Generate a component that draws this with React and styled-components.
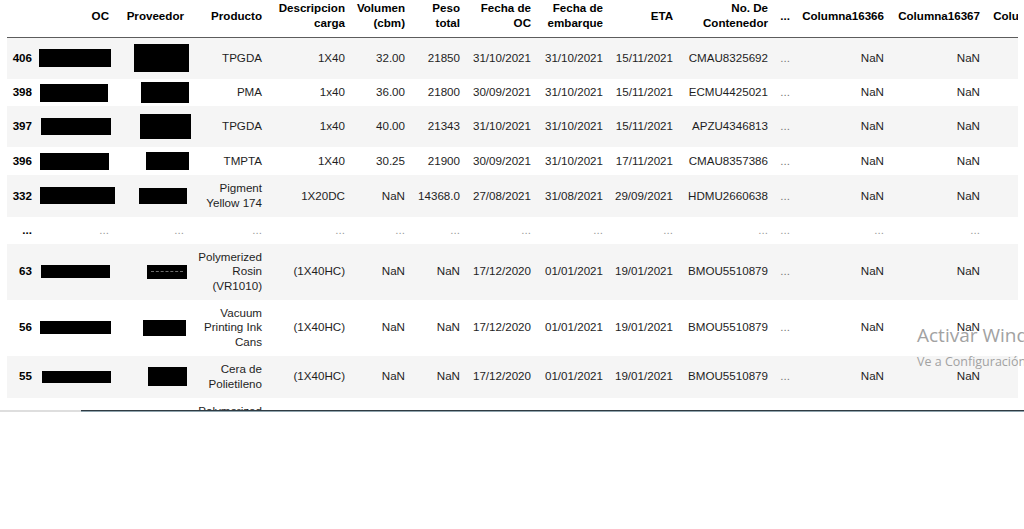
import React from "react";
import styled, { createGlobalStyle } from "styled-components";

const GlobalStyle = createGlobalStyle`
  html, body {
    margin: 0;
    background: #fff;
  }
  body {
    font-family: "Liberation Sans", Arial, sans-serif;
  }
`;

const Page = styled.div`
  position: relative;
  width: 1024px;
  height: 529px;
  overflow: hidden;
  background: #fff;
`;

const OutputArea = styled.div`
  width: 1018px;
  height: 410px;
  overflow: hidden;
`;

const Table = styled.table`
  margin: -5px 0 0 7px;
  border-collapse: collapse;
  border-spacing: 0;
  table-layout: fixed;
  width: ${(p) => p.$w}px;
  font-size: 11.6px;
  line-height: 14.5px;
  color: #1e1e1e;

  tbody tr:nth-child(odd) {
    background: #f5f5f5;
  }
`;

const Col = styled.col`
  width: ${(p) => p.$w}px;
`;

const HeadCell = styled.th`
  padding: 6.25px 6.5px 6.25px 5px;
  text-align: right;
  vertical-align: middle;
  font-weight: bold;
  color: #000;
  border-bottom: 1px solid #5c5c5c;
`;

const IndexCell = styled.th`
  padding: 6.25px 6.5px 6.25px 5px;
  text-align: right;
  vertical-align: middle;
  font-weight: bold;
  color: #000;
`;

const Row = styled.tr`
  height: ${(p) => p.$h}px;
`;

const Cell = styled.td`
  padding: ${(p) => (p.$tight ? "0" : "6.25px 6.5px 6.25px 5px")};
  text-align: right;
  vertical-align: middle;
  color: ${(p) => p.$tone || "#1e1e1e"};
`;

const Redact = styled.div`
  display: flex;
  align-items: center;
  box-sizing: border-box;
  padding: 0 4px;
  width: ${(p) => p.$w}px;
  height: ${(p) => p.$h}px;
  margin-left: auto;
  margin-right: ${(p) => p.$r}px;
  background: #000;
`;

const DashLine = styled.div`
  flex: 1;
  border-top: 1px dashed #6e6e6e;
`;

const ScrollTrack = styled.div`
  display: flex;
  height: 2px;
  background: #dedede;
`;

const ScrollThumb = styled.div`
  flex: 1;
  margin-left: 81px;
  box-sizing: border-box;
  border-top: 1px solid #2f3b42;
  background: #8fa3ad;
`;

const Watermark = styled.div`
  position: absolute;
  left: 917px;
  top: 323px;
  color: #a2a2a2;
  font-family: "Open Sans", "Noto Sans", sans-serif;
  white-space: nowrap;
  pointer-events: none;
`;

const WatermarkTitle = styled.div`
  font-size: 19px;
  line-height: 25px;
`;

const WatermarkSub = styled.div`
  margin-top: 6px;
  font-size: 12.5px;
  line-height: 16px;
`;

const columns = [
  { key: "idx", label: "", w: 31.5 },
  { key: "oc", label: "OC", w: 77 },
  { key: "prov", label: "Proveedor", w: 75 },
  { key: "prod", label: "Producto", w: 78 },
  { key: "desc", label: "Descripcion carga", w: 83 },
  { key: "vol", label: "Volumen (cbm)", w: 60 },
  { key: "peso", label: "Peso total", w: 55 },
  { key: "foc", label: "Fecha de OC", w: 71 },
  { key: "femb", label: "Fecha de embarque", w: 72 },
  { key: "eta", label: "ETA", w: 70 },
  { key: "cont", label: "No. De Contenedor", w: 95 },
  { key: "more", label: "...", w: 22 },
  { key: "c66", label: "Columna16366", w: 94 },
  { key: "c67", label: "Columna16367", w: 96 },
  { key: "c68", label: "Columna16368", w: 95 },
];

const tableWidth = columns.reduce((s, c) => s + c.w, 0);

const rows = [
  {
    idx: "406", h: 42,
    oc: { w: 72, h: 18, r: 4.5 }, prov: { w: 55, h: 28, r: 1.5 },
    vals: ["TPGDA", "1X40", "32.00", "21850", "31/10/2021", "31/10/2021", "15/11/2021", "CMAU8325692"],
  },
  {
    idx: "398", h: 27,
    oc: { w: 68, h: 18, r: 7.5 }, prov: { w: 48, h: 21, r: 1.5 },
    vals: ["PMA", "1x40", "36.00", "21800", "30/09/2021", "31/10/2021", "15/11/2021", "ECMU4425021"],
  },
  {
    idx: "397", h: 41,
    oc: { w: 70, h: 17, r: 4.5 }, prov: { w: 51, h: 25, r: -0.5 },
    vals: ["TPGDA", "1x40", "40.00", "21343", "31/10/2021", "31/10/2021", "15/11/2021", "APZU4346813"],
  },
  {
    idx: "396", h: 28,
    oc: { w: 69, h: 17, r: 6.5 }, prov: { w: 43, h: 18, r: 1.5 },
    vals: ["TMPTA", "1X40", "30.25", "21900", "30/09/2021", "31/10/2021", "17/11/2021", "CMAU8357386"],
  },
  {
    idx: "332", h: 41,
    oc: { w: 75, h: 17, r: 0.5 }, prov: { w: 48, h: 16, r: 3.5 },
    vals: ["Pigment Yellow 174", "1X20DC", "NaN", "14368.0", "27/08/2021", "31/08/2021", "29/09/2021", "HDMU2660638"],
  },
  { ellipsis: true, idx: "...", h: 27 },
  {
    idx: "63", h: 56,
    oc: { w: 69, h: 13, r: 5.5 }, prov: { w: 40, h: 14, r: 3.5, dash: true },
    vals: ["Polymerized Rosin (VR1010)", "(1X40HC)", "NaN", "NaN", "17/12/2020", "01/01/2021", "19/01/2021", "BMOU5510879"],
  },
  {
    idx: "56", h: 56,
    oc: { w: 71, h: 13, r: 4.5 }, prov: { w: 43, h: 16, r: 4.5 },
    vals: ["Vacuum Printing Ink Cans", "(1X40HC)", "NaN", "NaN", "17/12/2020", "01/01/2021", "19/01/2021", "BMOU5510879"],
  },
  {
    idx: "55", h: 42,
    oc: { w: 69, h: 12, r: 4.5 }, prov: { w: 39, h: 19, r: 3.5 },
    vals: ["Cera de Polietileno", "(1X40HC)", "NaN", "NaN", "17/12/2020", "01/01/2021", "19/01/2021", "BMOU5510879"],
  },
  {
    idx: "54", h: 56,
    oc: { w: 70, h: 13, r: 4.5 }, prov: { w: 42, h: 15, r: 3.5 },
    vals: ["Polymerized Rosin (VR1010)", "(1X40HC)", "NaN", "NaN", "17/12/2020", "01/01/2021", "19/01/2021", "BMOU5510879"],
  },
];

const Box = ({ spec }) => (
  <Redact $w={spec.w} $h={spec.h} $r={spec.r}>
    {spec.dash && <DashLine />}
  </Redact>
);

const DataRow = ({ row }) => {
  if (row.ellipsis) {
    return (
      <Row $h={row.h}>
        <IndexCell>...</IndexCell>
        {columns.slice(1).map((c) => (
          <Cell key={c.key} $tone="#9a9a9a">...</Cell>
        ))}
      </Row>
    );
  }
  return (
    <Row $h={row.h}>
      <IndexCell>{row.idx}</IndexCell>
      <Cell $tight>
        <Box spec={row.oc} />
      </Cell>
      <Cell $tight>
        <Box spec={row.prov} />
      </Cell>
      {row.vals.map((v, i) => (
        <Cell key={i}>{v}</Cell>
      ))}
      <Cell $tone="#777">...</Cell>
      <Cell>NaN</Cell>
      <Cell>NaN</Cell>
      <Cell>NaN</Cell>
    </Row>
  );
};

const App = () => {
  return (
    <Page>
      <GlobalStyle />
      <OutputArea>
        <Table $w={tableWidth}>
          <colgroup>
            {columns.map((c) => (
              <Col key={c.key} $w={c.w} />
            ))}
          </colgroup>
          <thead>
            <tr>
              {columns.map((c) => (
                <HeadCell key={c.key}>{c.label}</HeadCell>
              ))}
            </tr>
          </thead>
          <tbody>
            {rows.map((r) => (
              <DataRow key={r.idx} row={r} />
            ))}
          </tbody>
        </Table>
      </OutputArea>
      <ScrollTrack>
        <ScrollThumb />
      </ScrollTrack>
      <Watermark>
        <WatermarkTitle>Activar Windows</WatermarkTitle>
        <WatermarkSub>Ve a Configuración para activar Windows.</WatermarkSub>
      </Watermark>
    </Page>
  );
};

export default App;
